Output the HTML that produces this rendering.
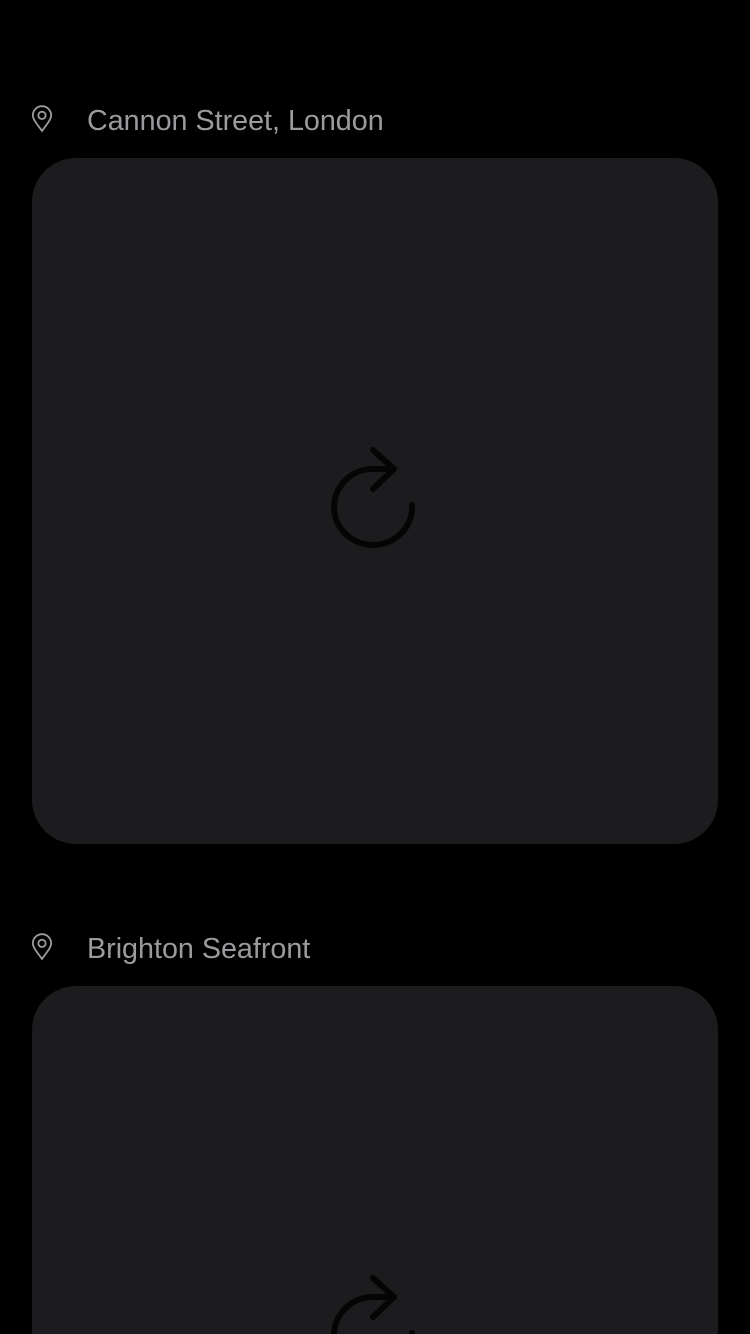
<!DOCTYPE html>
<html style="overflow:hidden;margin:0"><head><style>
body{margin:0;background:#000;overflow:hidden;font-family:"Liberation Sans",sans-serif}
#w{position:relative;width:750px;height:1334px;overflow:hidden;background:#000}
.lbl{position:absolute;left:87px;font-size:28.7px;color:#9b9b9f;line-height:32px}
.pin{position:absolute;left:31px}
.card{position:absolute;left:32px;width:686px;height:686px;background:#1c1c1e;border-radius:44px}
.ic{position:absolute;left:0;top:0}
</style></head><body><div id="w">
<svg class="pin" style="top:105px" width="22" height="28" viewBox="0 0 24 30"><path d="M12 28 C6 20 2 15 2 11 A10 10 0 0 1 22 11 C22 15 18 20 12 28Z" fill="none" stroke="#9b9b9f" stroke-width="2"/><circle cx="12" cy="11" r="4" fill="none" stroke="#9b9b9f" stroke-width="2"/></svg>
<div class="lbl" style="top:105px">Cannon Street, London</div>
<div class="card" style="top:158px"></div>
<svg class="pin" style="top:933px" width="22" height="28" viewBox="0 0 24 30"><path d="M12 28 C6 20 2 15 2 11 A10 10 0 0 1 22 11 C22 15 18 20 12 28Z" fill="none" stroke="#9b9b9f" stroke-width="2"/><circle cx="12" cy="11" r="4" fill="none" stroke="#9b9b9f" stroke-width="2"/></svg>
<div class="lbl" style="top:933px">Brighton Seafront</div>
<div class="card" style="top:986px;height:348px;border-radius:44px 44px 0 0"></div>
<svg class="ic" width="750" height="1334" viewBox="0 0 750 1334">
<g fill="none" stroke="#050505" stroke-width="6" stroke-linecap="round" stroke-linejoin="round">
<path d="M394 469 H374 A39 38 0 1 0 412 505"/><path d="M373 450 L394 469 L373 489"/>
<path d="M394 1297 H374 A39 38 0 1 0 412 1333"/><path d="M373 1278 L394 1297 L373 1317"/>
</g></svg>
</div></body></html>
